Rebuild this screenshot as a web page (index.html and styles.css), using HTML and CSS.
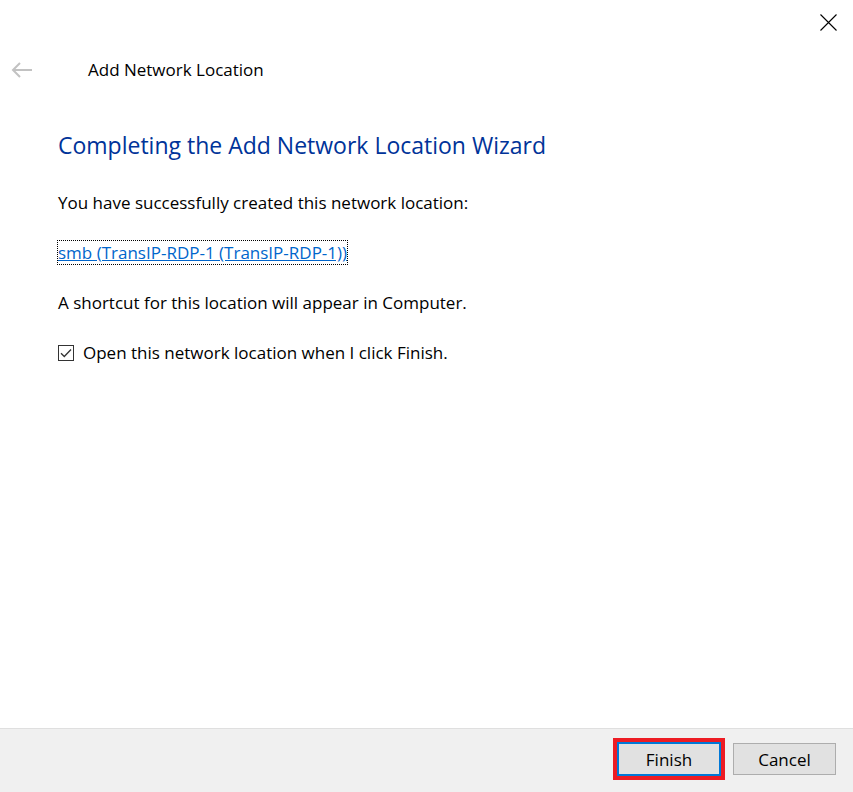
FILE: index.html
```html
<!DOCTYPE html>
<html>
<head>
<meta charset="utf-8">
<link rel="stylesheet" href="styles.css">
</head>
<body>
<div class="window">
  <div class="titlebar">
    <span class="close" aria-label="Close">
      <svg width="17" height="17" viewBox="0 0 17 17"><path d="M0.5 0.5 L16.5 16.5 M16.5 0.5 L0.5 16.5" stroke="#000" stroke-width="1.1" fill="none"/></svg>
    </span>
  </div>
  <div class="nav">
    <span class="back">
      <svg width="22" height="16" viewBox="0 0 22 16"><path d="M21 8 H2 M9 1 L2 8 L9 15" stroke="#c2c2c2" stroke-width="2" fill="none"/></svg>
    </span>
    <span class="navtitle">Add Network Location</span>
  </div>
  <div class="content">
    <h1 class="heading">Completing the Add Network Location Wizard</h1>
    <p class="text">You have successfully created this network location:</p>
    <p class="text linkrow"><a class="link" href="#">smb (TransIP-RDP-1 (TransIP-RDP-1))</a></p>
    <p class="text">A shortcut for this location will appear in Computer.</p>
    <label class="check">
      <span class="box"><svg width="14" height="14" viewBox="0 0 14 14"><path d="M2 7.2 L5.3 10.5 L12 3.5" stroke="#333" stroke-width="1.3" fill="none"/></svg></span>
      <span class="text">Open this network location when I click Finish.</span>
    </label>
  </div>
  <div class="footer">
    <div class="focusring"><button class="btn primary">Finish</button></div>
    <button class="btn">Cancel</button>
  </div>
</div>
</body>
</html>
```
FILE: styles.css
```css
html, body {
  margin: 0;
  padding: 0;
  background: #fff;
}
body {
  font-family: "Open Sans", "Noto Sans", sans-serif;
  color: #000;
}
.window {
  width: 853px;
  height: 792px;
  display: flex;
  flex-direction: column;
  overflow: hidden;
}
.titlebar {
  height: 40px;
  display: flex;
  justify-content: flex-end;
  align-items: flex-start;
}
.close {
  margin: 14px 16px 0 0;
  width: 17px;
  height: 17px;
  display: block;
}
.close svg { display: block; }
.nav {
  height: 60px;
  display: flex;
  align-items: center;
}
.back {
  width: 22px;
  height: 16px;
  margin-left: 11px;
  display: block;
}
.back svg { display: block; }
.navtitle {
  margin-left: 55px;
  font-size: 17px;
  line-height: 20px;
  color: #000;
}
.content {
  flex: 1;
  padding-left: 58px;
  padding-top: 29px;
}
.heading {
  margin: 0;
  font-weight: normal;
  font-size: 23px;
  line-height: 32px;
  color: #003399;
}
.text {
  font-size: 17px;
  line-height: 20px;
  margin: 0;
}
.content > .text:first-of-type {
  margin-top: 32px;
}
.content > .text + .text { margin-top: 30px; }
.link {
  color: #0066cc;
  text-decoration: underline;
  outline: 1px dotted #000;
  outline-offset: 0px;
}
.check {
  margin-top: 30px;
  display: flex;
  align-items: center;
  gap: 9px;
}
.box {
  width: 14px;
  height: 14px;
  border: 1px solid #333;
  display: block;
  background: #fff;
}
.box svg { display: block; }
.footer {
  height: 63px;
  border-top: 1px solid #dfdfdf;
  background: #f0f0f0;
  display: flex;
  justify-content: flex-end;
  align-items: flex-start;
  padding-right: 17px;
  gap: 8px;
}
.focusring {
  margin-top: 9px;
  border: 4px solid #ed1c24;
  display: flex;
}
.btn {
  font-family: "Open Sans", "Noto Sans", sans-serif;
  font-size: 17px;
  width: 103px;
  height: 32px;
  background: #e1e1e1;
  border: 1px solid #adadad;
  color: #000;
  padding: 0;
  margin-top: 14px;
}
.focusring .btn {
  margin-top: 0;
  width: 104px;
  height: 34px;
  border: 2px solid #0078d7;
}
```
